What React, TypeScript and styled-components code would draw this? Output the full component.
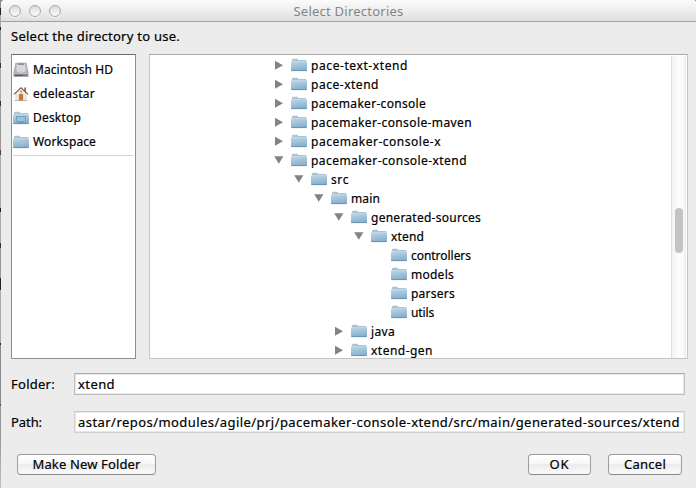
import React, { useLayoutEffect, useRef, useState } from 'react';
import styled, { createGlobalStyle } from 'styled-components';

const GlobalStyle = createGlobalStyle`
  * { box-sizing: border-box; }
  html, body { margin: 0; padding: 0; background: #9a9a9a; overflow: hidden; }
  body { font-family: 'Noto Sans', 'Open Sans', sans-serif; font-size: 13px; color: #000; }
`;

const Desktop = styled.div`
  width: 696px;
  height: 488px;
  padding-left: 1px;
  background: linear-gradient(#8b8b8b 0 8px, #222 8px 15px, #aaa 15px 27px, #222 27px 30px, #999 30px 63px, #333 63px 68px,
    #aaa 68px 101px, #333 101px 106px, #999 106px 150px, #444 150px 155px, #aaa 155px 208px, #222 208px 212px,
    #aaa 212px 243px, #333 243px 248px, #999 248px 278px, #222 278px 290px, #aaa 290px 343px, #222 343px 345px,
    #888 345px 404px, #555 404px 406px, #999 406px 440px, #c0c0c0 488px);
`;

const Window = styled.div`
  width: 695px;
  height: 488px;
  display: flex;
  flex-direction: column;
  background: #ececec;
  border-radius: 4px 3px 0 0;
  overflow: hidden;
`;

const TitleBar = styled.header`
  height: 22px;
  flex: none;
  display: grid;
  grid-template-columns: 60px 1fr 60px;
  align-items: center;
  background: linear-gradient(#fbfbfb, #ededed 55%, #dfdfdf);
  border-bottom: 1px solid #a0a0a0;
  color: #858585;
`;

const Lights = styled.div`
  display: flex;
  gap: 8px;
  padding-left: 8px;
`;

const Light = styled.span`
  flex: none;
  width: 12px;
  height: 12px;
  border-radius: 50%;
  border: 1px solid #a9a9a9;
  background: linear-gradient(#dadada, #ececec 50%, #fafafa);
  box-shadow: 0 1px 0 #f8f8f8;
`;

const Title = styled.div`
  display: flex;
  justify-content: center;
  padding-top: 1px;
`;

const Prompt = styled.div`
  height: 32px;
  flex: none;
  display: flex;
  align-items: center;
  padding: 0 0 4px 10px;
`;

const Panes = styled.div`
  height: 305px;
  flex: none;
  display: flex;
  gap: 13px;
  padding-left: 10px;
`;

const Sidebar = styled.nav`
  width: 125px;
  background: #fff;
  border: 1px solid #8e8e8e;
  border-top-color: #6c6c6c;
  padding: 3px 2px 0 1px;
`;

const Place = styled.div`
  height: 24px;
  display: flex;
  align-items: center;
  gap: 4px;
  font-size: 12px;
`;

const Divider = styled.hr`
  margin: 1px 0 0;
  border: 0;
  height: 1px;
  background: #d5d5d5;
`;

const TreePane = styled.section`
  width: 539px;
  display: flex;
  background: #fff;
  border: 1px solid #c6c6c6;
  border-top-color: #a9a9a9;
  padding-right: 1px;
  overflow: hidden;
`;

const Tree = styled.div`
  flex: 1;
  padding-top: 1px;
`;

const Row = styled.div<{ $depth: number }>`
  height: 19px;
  display: flex;
  align-items: center;
  padding-left: ${(p) => 123 + p.$depth * 20}px;
  font-size: 12px;
`;

const Toggle = styled.span`
  width: 18px;
  height: 13px;
  flex: none;
  display: flex;
`;

const RowName = styled.span`
  padding-left: 4px;
  display: flex;
`;

const Track = styled.div`
  width: 15px;
  margin-top: 1px;
  padding: 152px 0 0 3px;
  border-left: 1px solid #dedede;
  border-right: 1px solid #ececec;
  background: linear-gradient(90deg, #f2f2f2, #fcfcfc 50%, #fcfcfc 75%, #f4f4f4);
`;

const Thumb = styled.div`
  width: 8px;
  height: 45px;
  border-radius: 4px;
  background: #c3c3c3;
`;

const Form = styled.div`
  padding: 14px 0 0 10px;
  display: grid;
  grid-template-columns: 63px 611px;
  row-gap: 16px;
`;

const FieldName = styled.label`
  display: flex;
  align-items: center;
`;

const Field = styled.div<{ $soft?: boolean }>`
  height: 22px;
  display: flex;
  align-items: center;
  padding-left: 3px;
  overflow: hidden;
  background: #fff;
  border: 1px solid ${(p) => (p.$soft ? '#d2d2d2' : '#bebebe')};
  border-top-color: ${(p) => (p.$soft ? '#c8c8c8' : '#acacac')};
  box-shadow: inset 0 0 0 1px #e8e8e8;
`;

const Actions = styled.footer`
  display: flex;
  padding: 21px 14px 0 16px;
`;

const Spacer = styled.div`
  flex: 1;
`;

const Button = styled.button<{ $w: number; $after?: number }>`
  width: ${(p) => p.$w}px;
  height: 21px;
  margin-right: ${(p) => p.$after ?? 0}px;
  padding: 0 0 1px;
  display: flex;
  align-items: center;
  justify-content: center;
  font: inherit;
  color: #000;
  border: 1px solid #9c9c9c;
  border-bottom-color: #888;
  border-radius: 4px;
  background: linear-gradient(#fff, #f7f7f7 48%, #ececec 50%, #fafafa);
`;

const Line = styled.span<{ $light?: boolean }>`
  display: block;
  width: max-content;
  white-space: pre;
  line-height: 18px;
  font-weight: 400;
  -webkit-text-stroke: ${(p) => (p.$light ? '0' : '0.2px')};
`;

/** Single line of text whose tracking is adjusted to fill a set width. */
function Fit({ w, light, children }: { w: number; light?: boolean; children: string }) {
  const ref = useRef<HTMLSpanElement>(null);
  const [tracking, setTracking] = useState(0);
  useLayoutEffect(() => {
    if (ref.current) setTracking((w - ref.current.getBoundingClientRect().width) / children.length);
  }, [w, children]);
  return (
    <Line ref={ref} $light={light} style={{ letterSpacing: tracking }}>
      {children}
    </Line>
  );
}

const Icon = styled.svg`
  display: block;
  flex: none;
`;

function FolderIcon({ desktop }: { desktop?: boolean }) {
  return (
    <Icon width="16" height="15" viewBox="0 0 16 15">
      <defs>
        <linearGradient id="folder" x1="0" y1="0" x2="0.25" y2="1">
          <stop offset="0" stopColor="#bdd6e6" />
          <stop offset="1" stopColor="#86b1ce" />
        </linearGradient>
      </defs>
      <path d="M1 4V1.8Q1 .7 2 .7H6Q7 .7 7.2 2H14.5Q15.4 2 15.4 3V5H1Z" fill="#a9c4d3" />
      <path d="M0 3.4H16V12.3Q16 13 15.2 13H.8Q0 13 0 12.3Z" fill="url(#folder)" />
      <path d="M.4 3.7H15.6" stroke="#cfe1ec" strokeWidth=".7" />
      <path d="M.4 12.6H15.6" stroke="#6390ae" strokeWidth=".9" />
      {desktop && (
        <>
          <rect x="3.5" y="5.5" width="9" height="5.5" fill="#9cc2db" stroke="#6d9fc0" strokeWidth=".9" />
          <path d="M5 11h6" stroke="#5d90b2" />
        </>
      )}
    </Icon>
  );
}

function DiskIcon() {
  return (
    <Icon width="16" height="16" viewBox="0 0 16 16">
      <path d="M2.7 1H13.3L15.3 11.3H.7Z" fill="#b4b4b8" stroke="#9a9a9e" strokeWidth=".5" />
      <path d="M4.2 1.8H11.8L13 8Q8 10.4 3 8Z" fill="#d9d9dc" />
      <path d="M5 1.5H11V2.7H5Z" fill="#77777b" />
      <path d="M4 9.3Q8 11 12 9.3" fill="none" stroke="#efefef" strokeWidth=".8" />
      <path d="M.6 11.2H15.4V14.2Q15.4 14.8 14.8 14.8H1.2Q.6 14.8 .6 14.2Z" fill="#88888c" />
      <path d="M1 11.5H15" stroke="#cfcfd1" strokeWidth=".7" />
      <path d="M2 13.4H10" stroke="#58585c" />
    </Icon>
  );
}

function HomeIcon() {
  return (
    <Icon width="16" height="16" viewBox="0 0 16 16">
      <path d="M11.3 1.6H13V6H11.3Z" fill="#a65a3c" />
      <path d="M3 7L8 2.5L13 7V14.5H3Z" fill="#f4efe6" stroke="#c9bda9" strokeWidth=".6" />
      <path d="M1 8.4L8 1.7L15 8.4" fill="none" stroke="#6a564a" strokeWidth="1.1" />
      <circle cx="8" cy="5.6" r="1.2" fill="#a9a39a" />
      <path d="M6.3 8.3H9.7V14.5H6.3Z" fill="#d76d27" stroke="#9a4d1f" strokeWidth=".5" />
      <path d="M1.5 14.6H14.5" stroke="#b9ad96" strokeWidth=".8" />
    </Icon>
  );
}

function Arrow({ open }: { open: boolean }) {
  return (
    <Icon width="12" height="13" viewBox="0 0 12 13">
      <path d={open ? 'M1.2 2.2H10.4L5.8 9.8Z' : 'M2 1.8L10 6.2L2 10.7Z'} fill="#838383" />
    </Icon>
  );
}

type Node = [depth: number, name: string, width: number, state?: 'open' | 'closed'];

const nodes: Node[] = [
  [0, 'pace-text-xtend', 97, 'closed'],
  [0, 'pace-xtend', 68, 'closed'],
  [0, 'pacemaker-console', 115, 'closed'],
  [0, 'pacemaker-console-maven', 161, 'closed'],
  [0, 'pacemaker-console-x', 130, 'closed'],
  [0, 'pacemaker-console-xtend', 156, 'open'],
  [1, 'src', 18, 'open'],
  [2, 'main', 29, 'open'],
  [3, 'generated-sources', 110, 'open'],
  [4, 'xtend', 33, 'open'],
  [5, 'controllers', 60],
  [5, 'models', 43],
  [5, 'parsers', 44],
  [5, 'utils', 23],
  [3, 'java', 24, 'closed'],
  [3, 'xtend-gen', 62, 'closed'],
];

export default function App() {
  return (
    <Desktop>
      <GlobalStyle />
      <Window>
        <TitleBar>
          <Lights>
            <Light />
            <Light />
            <Light />
          </Lights>
          <Title>
            <Fit w={110} light>Select Directories</Fit>
          </Title>
        </TitleBar>
        <Prompt>
          <Fit w={169}>Select the directory to use.</Fit>
        </Prompt>
        <Panes>
          <Sidebar>
            <Place><DiskIcon /><Fit w={80}>Macintosh HD</Fit></Place>
            <Place><HomeIcon /><Fit w={62}>edeleastar</Fit></Place>
            <Place><FolderIcon desktop /><Fit w={48}>Desktop</Fit></Place>
            <Place><FolderIcon /><Fit w={63}>Workspace</Fit></Place>
            <Divider />
          </Sidebar>
          <TreePane>
            <Tree>
              {nodes.map(([depth, name, width, state]) => (
                <Row key={name} $depth={depth}>
                  <Toggle>{state && <Arrow open={state === 'open'} />}</Toggle>
                  <FolderIcon />
                  <RowName><Fit w={width}>{name}</Fit></RowName>
                </Row>
              ))}
            </Tree>
            <Track><Thumb /></Track>
          </TreePane>
        </Panes>
        <Form>
          <FieldName><Fit w={44}>Folder:</Fit></FieldName>
          <Field><Fit w={37}>xtend</Fit></Field>
          <FieldName><Fit w={31}>Path:</Fit></FieldName>
          <Field $soft>
            <Fit w={602}>astar/repos/modules/agile/prj/pacemaker-console-xtend/src/main/generated-sources/xtend</Fit>
          </Field>
        </Form>
        <Actions>
          <Button $w={139}><Fit w={108}>Make New Folder</Fit></Button>
          <Spacer />
          <Button $w={63} $after={17}><Fit w={20}>OK</Fit></Button>
          <Button $w={74}><Fit w={42}>Cancel</Fit></Button>
        </Actions>
      </Window>
    </Desktop>
  );
}
